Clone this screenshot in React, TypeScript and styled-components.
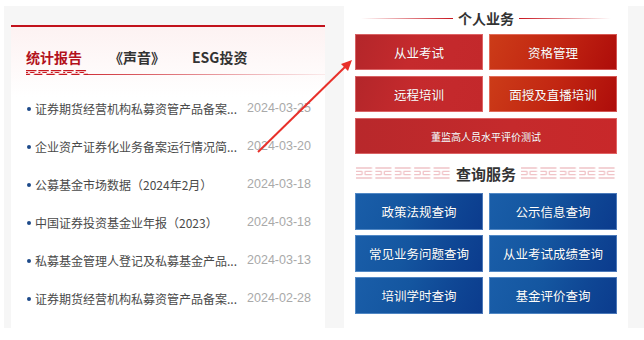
import React from 'react';
import styled, { createGlobalStyle } from 'styled-components';

const GlobalStyle = createGlobalStyle`
  body {
    margin: 0;
    background: #fff;
    font-family: "Microsoft YaHei", "Noto Sans CJK SC", sans-serif;
  }
`;

const Page = styled.div`
  position: relative;
  margin: 6px 0 0 4px;
  width: 640px;
  height: 322px;
  display: flex;
  background: #f6f6f6;
`;

const LeftColumn = styled.div`
  width: 340px;
  padding: 19px 19px 0 7px;
  box-sizing: border-box;
`;

const Card = styled.div`
  height: 100%;
  border-top: 2px solid #c2121c;
  background: linear-gradient(180deg, #fdf2f2 0, #fff 70px);
  padding: 19px 14px 0 15px;
  box-sizing: border-box;
`;

const Tabs = styled.div`
  display: flex;
  gap: 27px;
`;

const Tab = styled.div<{ active?: boolean }>`
  font-size: 14px;
  font-weight: bold;
  line-height: 22px;
  color: ${({ active }) => (active ? '#b3121c' : '#333')};
`;

const TabRule = styled.div`
  display: flex;
  align-items: flex-end;
  height: 5px;
  margin: 2px -14px 0 0;
`;

const RuleLine = styled.div`
  flex: 1;
  height: 1px;
  background: linear-gradient(90deg, #d0323a, #f3c9cc 80%, #fbeaea);
`;

const List = styled.ul`
  list-style: none;
  margin: 14px 0 0;
  padding: 0;
`;

const Item = styled.li`
  display: flex;
  align-items: center;
  height: 38px;
`;

const Dot = styled.span`
  width: 4px;
  height: 4px;
  border-radius: 50%;
  background: #1d4a8a;
  margin: 1px 4px 0 1px;
  flex-shrink: 0;
`;

const ItemTitle = styled.span`
  flex: 1;
  font-size: 12px;
  color: #4a4a4a;
  white-space: nowrap;
`;

const ItemDate = styled.span`
  font-family: "Liberation Sans", Arial, sans-serif;
  font-size: 12.5px;
  color: #a9a9a9;
`;

const RightPanel = styled.div`
  width: 284px;
  background: #fff;
  padding: 0 11px;
  box-sizing: border-box;
`;

const SectionTitle = styled.div<{ size: number }>`
  display: flex;
  align-items: center;
  justify-content: center;
  gap: 5px;
  height: 24px;
  font-size: ${({ size }) => size}px;
  font-weight: bold;
  color: #333;
`;

const FadeLine = styled.div<{ dir: 'left' | 'right' }>`
  width: 92px;
  height: 1px;
  background: linear-gradient(
    ${({ dir }) => (dir === 'left' ? '90deg' : '270deg')},
    rgba(200, 20, 30, 0) 0,
    #c8141e 100%
  );
`;

const ButtonGrid = styled.div<{ gap: number }>`
  display: grid;
  grid-template-columns: 1fr 1fr;
  gap: ${({ gap }) => gap}px 6px;
`;

const tones = {
  red: 'linear-gradient(110deg, #b3262a 0%, #c52a2d 45%, #c3282b 100%)',
  orange: 'linear-gradient(115deg, #cc3c18 0%, #c22612 50%, #ad0c0a 100%)',
  wide: 'linear-gradient(90deg, #b8282b 0%, #c52a2c 60%, #c8282a 100%)',
  blue: 'linear-gradient(115deg, #1a5ea9 0%, #1456a0 40%, #0f4795 70%, #0b3b8d 100%)',
};

const Tile = styled.div<{ tone: keyof typeof tones; wide?: boolean; h: number; small?: boolean }>`
  grid-column: ${({ wide }) => (wide ? '1 / span 2' : 'auto')};
  height: ${({ h }) => h}px;
  display: flex;
  align-items: center;
  justify-content: center;
  background: ${({ tone }) => tones[tone]};
  box-shadow: inset 0 0 0 1px ${({ tone }) => (tone === 'blue' ? 'rgba(150,190,235,0.45)' : 'rgba(255,170,170,0.45)')};
  color: #fff;
  font-size: ${({ small }) => (small ? 10 : 12.5)}px;
  text-shadow: 0 0 1px rgba(0, 0, 0, 0.25);
`;

const QueryTitle = styled(SectionTitle)`
  height: 26px;
  margin: 6px 0 7px;
  gap: 4px;
`;

const Overlay = styled.svg`
  position: absolute;
  left: -4px;
  top: -6px;
  pointer-events: none;
`;

const TabPattern = () => (
  <svg width="62" height="5" viewBox="0 0 62 5">
    <defs>
      <pattern id="tabp" width="12.4" height="5" patternUnits="userSpaceOnUse">
        <path d="M0 0.6 H10.4 M0 2.5 H2 M4 2.5 H8.4 M0 4.4 H4 M8 4.4 H12.4" stroke="#c8161e" strokeWidth="1.1" fill="none" />
      </pattern>
    </defs>
    <rect width="62" height="5" fill="url(#tabp)" />
  </svg>
);

const Fret = ({ id }: { id: string }) => (
  <svg width="97" height="12" viewBox="0 0 97 12">
    <defs>
      <pattern id={id} width="19.4" height="12" patternUnits="userSpaceOnUse">
        <path
          d="M1 1 H17 M1 4.3 H7 M10 4.3 H17 M1 7.7 H7 M10 7.7 H17 M1 11 H17 M7 4.3 V7.7 M10 4.3 V7.7"
          stroke="#f0c3c7"
          strokeWidth="1.3"
          fill="none"
        />
      </pattern>
    </defs>
    <rect width="97" height="12" fill={`url(#${id})`} />
  </svg>
);

const news = [
  ['证券期货经营机构私募资管产品备案...', '2024-03-25'],
  ['企业资产证券化业务备案运行情况简...', '2024-03-20'],
  ['公募基金市场数据（2024年2月）', '2024-03-18'],
  ['中国证券投资基金业年报（2023）', '2024-03-18'],
  ['私募基金管理人登记及私募基金产品...', '2024-03-13'],
  ['证券期货经营机构私募资管产品备案...', '2024-02-28'],
];

const queries = ['政策法规查询', '公示信息查询', '常见业务问题查询', '从业考试成绩查询', '培训学时查询', '基金评价查询'];

export default function App() {
  return (
    <>
      <GlobalStyle />
      <Page>
        <LeftColumn>
          <Card>
            <Tabs>
              <Tab active>统计报告</Tab>
              <Tab>《声音》</Tab>
              <Tab>ESG投资</Tab>
            </Tabs>
            <TabRule>
              <TabPattern />
              <RuleLine />
            </TabRule>
            <List>
              {news.map(([title, date], i) => (
                <Item key={i}>
                  <Dot />
                  <ItemTitle>{title}</ItemTitle>
                  <ItemDate>{date}</ItemDate>
                </Item>
              ))}
            </List>
          </Card>
        </LeftColumn>
        <RightPanel>
          <SectionTitle size={14} style={{ marginBottom: 4 }}>
            <FadeLine dir="left" />
            个人业务
            <FadeLine dir="right" />
          </SectionTitle>
          <ButtonGrid gap={6}>
            <Tile tone="red" h={36}>从业考试</Tile>
            <Tile tone="orange" h={36}>资格管理</Tile>
            <Tile tone="red" h={36}>远程培训</Tile>
            <Tile tone="orange" h={36}>面授及直播培训</Tile>
            <Tile tone="wide" h={36} wide small>董监高人员水平评价测试</Tile>
          </ButtonGrid>
          <QueryTitle size={15}>
            <Fret id="fl" />
            查询服务
            <Fret id="fr" />
          </QueryTitle>
          <ButtonGrid gap={5}>
            {queries.map((q) => (
              <Tile key={q} tone="blue" h={37}>{q}</Tile>
            ))}
          </ButtonGrid>
        </RightPanel>
        <Overlay width="644" height="340" viewBox="0 0 644 340">
          <line x1="258" y1="152" x2="346" y2="66" stroke="#e8302a" strokeWidth="2" />
          <polygon points="352,60 341,64 348,71" fill="#e8302a" />
        </Overlay>
      </Page>
    </>
  );
}
